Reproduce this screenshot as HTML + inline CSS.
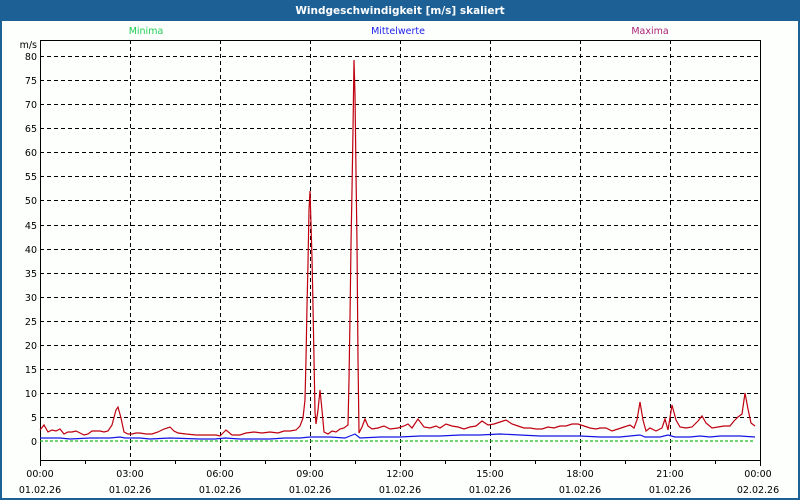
<!DOCTYPE html>
<html><head><meta charset="utf-8"><style>
html,body{margin:0;padding:0;width:800px;height:500px;overflow:hidden;background:#fff;font-family:"DejaVu Sans","Liberation Sans",sans-serif}
</style></head><body>
<svg width="800" height="500" xmlns="http://www.w3.org/2000/svg" font-family="DejaVu Sans, Liberation Sans, sans-serif" font-size="9.5">
<rect x="0" y="0" width="800" height="500" fill="#1d6096"/>
<rect x="2" y="21" width="796" height="477" fill="#fcfffc"/>
<text x="400" y="14" fill="#fff" font-weight="bold" font-size="10.5" text-anchor="middle">Windgeschwindigkeit [m/s] skaliert</text>
<text x="146" y="34" fill="#22cc55" text-anchor="middle">Minima</text>
<text x="398" y="34" fill="#2222ee" text-anchor="middle">Mittelwerte</text>
<text x="650" y="34" fill="#aa2277" text-anchor="middle">Maxima</text>
<text x="37" y="48" fill="#000" text-anchor="end">m/s</text>
<g stroke="#000" stroke-width="1" stroke-dasharray="4,3" fill="none">
<path d="M40 56.5H760M40 80.5H760M40 104.5H760M40 128.5H760M40 152.5H760M40 176.5H760M40 200.5H760M40 225.5H760M40 249.5H760M40 273.5H760M40 297.5H760M40 321.5H760M40 345.5H760M40 369.5H760M40 393.5H760M40 417.5H760"/>
<path d="M130.5 40V460M220.5 40V460M310.5 40V460M400.5 40V460M490.5 40V460M580.5 40V460M670.5 40V460"/>
</g>
<rect x="40.5" y="40.5" width="720" height="420" fill="none" stroke="#000"/>
<g stroke="#000"><path d="M85.5 460v4M130.5 460v6M175.5 460v4M220.5 460v6M265.5 460v4M310.5 460v6M355.5 460v4M400.5 460v6M445.5 460v4M490.5 460v6M535.5 460v4M580.5 460v6M625.5 460v4M670.5 460v6M715.5 460v4M760.5 460v6M40.5 460v6"/></g>
<g fill="#000" text-anchor="end">
<text x="37" y="60">80</text><text x="37" y="84">75</text><text x="37" y="108">70</text><text x="37" y="132">65</text><text x="37" y="156">60</text><text x="37" y="180">55</text><text x="37" y="204">50</text><text x="37" y="229">45</text><text x="37" y="253">40</text><text x="37" y="277">35</text><text x="37" y="301">30</text><text x="37" y="325">25</text><text x="37" y="349">20</text><text x="37" y="373">15</text><text x="37" y="397">10</text><text x="37" y="421">5</text><text x="37" y="445">0</text>
</g>
<g fill="#000" text-anchor="middle">
<text x="40" y="477">00:00</text><text x="40" y="493">01.02.26</text>
<text x="130" y="477">03:00</text><text x="130" y="493">01.02.26</text>
<text x="220" y="477">06:00</text><text x="220" y="493">01.02.26</text>
<text x="310" y="477">09:00</text><text x="310" y="493">01.02.26</text>
<text x="400" y="477">12:00</text><text x="400" y="493">01.02.26</text>
<text x="490" y="477">15:00</text><text x="490" y="493">01.02.26</text>
<text x="580" y="477">18:00</text><text x="580" y="493">01.02.26</text>
<text x="670" y="477">21:00</text><text x="670" y="493">01.02.26</text>
<text x="758" y="477">00:00</text><text x="758" y="493">02.02.26</text>
</g>
<path d="M40 441H755" stroke="#22bb22" stroke-width="1.2" stroke-dasharray="3,2"/>
<polyline fill="none" stroke="#1414e6" stroke-width="1.2" points="40,438 60,438 70,439 90,438 110,438 120,437 125,438 140,438 150,439 170,438 200,439 215,439 225,438 240,439 270,439 285,438 300,438 310,437 330,437 345,438 350,436 355,434 360,438 380,437 400,437 420,436 440,436 460,435 480,435 500,434 520,435 540,436 560,436 580,436 600,437 620,437 630,436 640,435 645,437 660,437 668,435 675,437 690,437 700,436 710,437 720,436 740,436 755,437"/>
<polyline fill="none" stroke="#c00010" stroke-width="1.2" points="40,430 44,425 48,432 52,430 56,431 60,429 64,434 68,432 72,432 76,431 80,433 84,435 88,434 92,431 96,431 100,431 104,432 108,431 112,425 116,410 118,407 121,418 124,432 128,434 132,434 136,433 140,433 146,434 152,434 158,432 164,429 170,427 174,431 178,433 186,434 196,435 206,435 216,435 220,436 226,430 232,435 240,435 246,433 254,432 262,433 270,432 278,433 284,431 290,431 296,430 300,426 303,418 305,400 306,359 307,306 308,263 309,210 310,191 311,224 312,258 313,306 314,359 315,412 316,424 318,410 320,390 322,410 324,432 328,434 332,431 336,432 340,429 344,428 348,425 349,380 350,318 351,244 352,190 353,130 354,60 355,95 356,172 357,244 358,359 359,433 362,427 365,419 368,426 372,429 378,428 384,426 390,429 398,428 404,426 408,424 412,428 418,419 424,427 430,428 436,426 440,428 446,424 452,426 458,427 464,429 470,427 476,426 482,421 488,425 494,424 500,422 506,420 512,424 518,426 524,428 530,428 536,429 542,429 548,427 554,428 560,426 566,426 572,424 578,424 584,426 590,428 596,429 600,428 606,428 612,431 618,429 624,427 630,425 634,428 637,420 640,402 643,420 646,431 650,428 656,431 662,428 665,419 668,430 672,405 676,420 680,427 686,428 692,427 698,421 702,416 706,423 712,428 718,427 724,426 730,426 734,421 738,417 742,414 745,393 748,409 751,423 755,426"/>
</svg>
</body></html>
